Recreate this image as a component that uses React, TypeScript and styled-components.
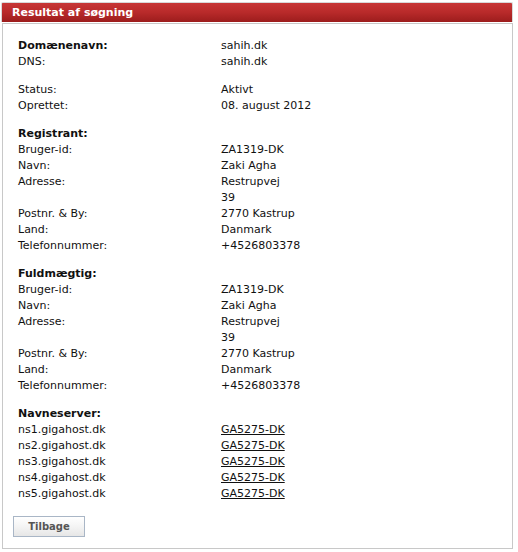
import React from 'react';
import styled, {createGlobalStyle} from 'styled-components';

type Row = {label: string; value?: string[]; link?: boolean};
type Section = {title?: string; head?: Row; rows: Row[]};

const GlobalStyle = createGlobalStyle`
  html, body {
    margin: 0;
    padding: 0;
    background: #fff;
  }
  body {
    font-family: Verdana, "DejaVu Sans", sans-serif;
    font-size: 11px;
    color: #111;
  }
`;

const Wrapper = styled.div`
  width: 512px;
  padding: 2px 0 0 1px;
`;

const Header = styled.div`
  height: 19px;
  line-height: 19px;
  padding-left: 10px;
  border: 1px solid #d8d8d8;
  border-bottom: 0;
  border-radius: 2px 2px 0 0;
  background: linear-gradient(to bottom, #c73636 0%, #b82a2a 50%, #9c1c1c 100%);
  color: #fff;
  font-weight: bold;
  font-size: 11px;
`;

const Box = styled.div`
  margin: 1px 0 0 1px;
  width: 509px;
  border: 1px solid #c8c8c8;
  padding: 14px 0 11px 0;
`;

const Block = styled.div`
  display: flex;
  flex-direction: column;
  padding-left: 15px;
  & + & {
    margin-top: 12px;
  }
`;

const Line = styled.div`
  display: grid;
  grid-template-columns: 203px 1fr;
  line-height: 16px;
`;

const Label = styled.div<{$bold?: boolean}>`
  font-weight: ${p => (p.$bold ? 'bold' : 'normal')};
`;

const Value = styled.div<{$link?: boolean}>`
  text-decoration: ${p => (p.$link ? 'underline' : 'none')};
  color: ${p => (p.$link ? '#111' : 'inherit')};
`;

const ButtonRow = styled.div`
  padding: 14px 0 0 10px;
`;

const BackButton = styled.button`
  width: 72px;
  height: 21px;
  border: 1px solid #a9b6c6;
  background: linear-gradient(to bottom, #ffffff 0%, #f4f4f4 50%, #e6e6e6 100%);
  font-family: Verdana, "DejaVu Sans", sans-serif;
  font-size: 10px;
  font-weight: bold;
  color: #555;
  padding: 0;
`;

const person = (id: string): Row[] => [
  {label: 'Bruger-id:', value: [id]},
  {label: 'Navn:', value: ['Zaki Agha']},
  {label: 'Adresse:', value: ['Restrupvej', '39']},
  {label: 'Postnr. & By:', value: ['2770 Kastrup']},
  {label: 'Land:', value: ['Danmark']},
  {label: 'Telefonnummer:', value: ['+4526803378']},
];

const sections: Section[] = [
  {
    head: {label: 'Domænenavn:', value: ['sahih.dk']},
    rows: [{label: 'DNS:', value: ['sahih.dk']}],
  },
  {
    rows: [
      {label: 'Status:', value: ['Aktivt']},
      {label: 'Oprettet:', value: ['08. august 2012']},
    ],
  },
  {title: 'Registrant:', rows: person('ZA1319-DK')},
  {title: 'Fuldmægtig:', rows: person('ZA1319-DK')},
  {
    title: 'Navneserver:',
    rows: [1, 2, 3, 4, 5].map(n => ({
      label: `ns${n}.gigahost.dk`,
      value: ['GA5275-DK'],
      link: true,
    })),
  },
];

const DataLine = ({row, bold}: {row: Row; bold?: boolean}) => (
  <Line>
    <Label $bold={bold}>{row.label}</Label>
    <div>
      {(row.value || []).map((v, i) => (
        <Value key={i} $link={row.link}>
          {v}
        </Value>
      ))}
    </div>
  </Line>
);

export default function App() {
  return (
    <>
      <GlobalStyle />
      <Wrapper>
        <Header>Resultat af søgning</Header>
        <Box>
          {sections.map((s, i) => (
            <Block key={i}>
              {s.head && <DataLine row={s.head} bold />}
              {s.title && <DataLine row={{label: s.title}} bold />}
              {s.rows.map((r, j) => (
                <DataLine key={j} row={r} />
              ))}
            </Block>
          ))}
          <ButtonRow>
            <BackButton>Tilbage</BackButton>
          </ButtonRow>
        </Box>
      </Wrapper>
    </>
  );
}
